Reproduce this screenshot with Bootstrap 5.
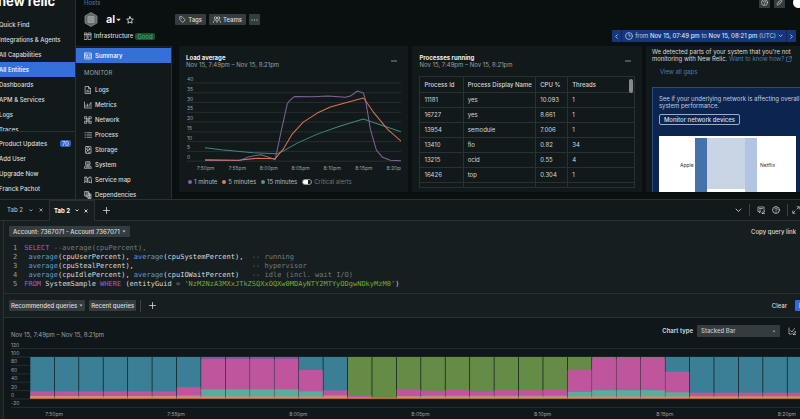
<!DOCTYPE html>
<html lang="en" data-bs-theme="dark">
<head>
<meta charset="utf-8">
<meta name="viewport" content="width=device-width, initial-scale=1">
<title>Hosts – al</title>
<link href="https://cdn.jsdelivr.net/npm/bootstrap@5.3.0/dist/css/bootstrap.min.css" rel="stylesheet">
<style>
:root{--line:#2a3133;--panel:#12191b;--txt:#d9dcdc;--dim:#9ba1a2;--blue:#3470d8;--btn:#343c3f}
body{font:500 6px/8px Inter,"Liberation Sans",sans-serif;background:#0a0f10;color:var(--txt);overflow:hidden}
a{color:inherit;text-decoration:none}
svg{display:block;flex:none}
.ic{fill:none;stroke:currentColor;stroke-width:1.3;stroke-linecap:round;stroke-linejoin:round}
.thin{stroke-width:.8}
.fit{min-height:0}
.upper{height:47.5vh;flex:none}
.side{width:76px;background:var(--panel);border-right:1px solid var(--line);flex:none}
.brand{font-size:13px;line-height:14px;font-weight:700;margin:-6px 0 9px -2px;color:#fff;white-space:nowrap}
.side a{height:15px;flex:none;white-space:nowrap}
.side a.on,.subnav a.on{background:var(--blue);color:#fff}
.side .low{border-top:1px solid var(--line);padding:4px 0 3px}
.side a span:first-child{margin-left:-1px}
.pill{background:#2b62c4;border-radius:2px;font-size:6px;line-height:7px;padding:0 2px;margin-right:4px;color:#dfe8fb}
.head{height:46px;flex:none}
.tbtn{--bs-btn-padding-x:4px;--bs-btn-padding-y:0;--bs-btn-font-size:6px;--bs-btn-line-height:11px;--bs-btn-border-radius:1px;--bs-btn-border-width:0px;--bs-btn-bg:var(--btn);--bs-btn-color:#dcdfdf;--bs-btn-font-weight:500;height:11px;white-space:nowrap;display:inline-flex;align-items:center;gap:2px}
.tbtn.slim{--bs-btn-padding-x:2px}
.tight{gap:2px}
.plain{background:none;border:0;padding:0;color:var(--txt);font-weight:500;display:flex}
.hosts{color:#4b6ea3;line-height:6px}
.title{font-size:11px;line-height:13px;font-weight:600;color:#fff;gap:1px}
.titlerow{margin:6px 0 5px}
.star{margin-left:5px}
.tagrow{margin-left:41px;gap:3px}
.good{background:#1c5237;color:#43b37a;border-radius:2px;padding:0 2px;line-height:7px;font-weight:400}
.corner{margin-top:-3px}
.avatar{width:11px;height:11px;margin-right:-8px}
.period{background:#17377c;color:#b9cdf3;height:12px;border-radius:1px}
.period button{color:inherit;background:none;border:0;padding:0 3px;font-weight:400;gap:2px;line-height:12px;align-items:center;display:flex;white-space:nowrap}
.period button+button{border-left:1px solid #0e2758}
.period b{font-weight:500;color:#d6e2fa}
.subnav{width:96px;background:var(--panel);border-right:1px solid var(--line);flex:none;padding-top:1px;border-top:1px solid #1b2325}
.subnav a{height:15px;padding-left:8px;gap:3px;flex:none}
.subnav .grp{color:var(--dim);font-size:6px;font-weight:400;line-height:8px;margin:6px 0 5px 8px}
.board{padding:0 0 7px 7px;gap:4px}
.tile{background:var(--panel);padding:8px 7px 0;flex:229 1 0;min-width:0}
.tile h2{font-size:6px;line-height:7px;font-weight:700;margin:0;color:#eceeee}
.dim{color:var(--dim);font-weight:400}
.tile p{line-height:7px;margin:0;white-space:nowrap}
.gaps{flex:150 1 0;padding-top:2px;padding-left:6px;font-weight:400}
.lnk{color:#4c79b8}
.viewall{margin:6px 0 11px 8px}
.promo{background:#0c2450;border:1px solid #2a4a80;border-right:0;border-bottom:0;padding:7px 0 0 6px;margin-right:-7px;color:#c4cddf;gap:5px}
.promo .btn{--bs-btn-bg:transparent;--bs-btn-border-width:1px;--bs-btn-border-color:#9fabc4;border-radius:2px;line-height:9px;flex:none}
.flow{margin-top:6px}
.tbl-wrap{border:1px solid var(--line);overflow:hidden;min-height:0;position:relative}
.procs{--bs-table-bg:transparent;--bs-table-color:#d5d8d8;margin:0;table-layout:fixed;border-color:var(--line)}
.procs>:not(caption)>*>*{padding:3px 4px;line-height:8px;font-weight:400;border-width:0 1px 1px 0;border-color:var(--line);height:15px;white-space:nowrap}
.procs thead th{font-weight:500}
.procs tr>:last-child{border-right-width:0}
.w1{width:20%}.w2{width:34%}.w3{width:15%}
.thumb{position:absolute;right:1px;top:2px;width:4px;height:14px;background:#858b8c;border-radius:2px}
.dot{width:4px;height:4px;border-radius:50%;flex:none}
.d1{background:#8a62a6}.d2{background:#e8795a}.d3{background:#4b9a83}
.legend{gap:5px;font-weight:400;line-height:8px;white-space:nowrap;color:#b6baba;padding-left:2px;margin-top:5px}
.crit{color:#70787a;gap:2px}
.sw{appearance:none;width:10px;height:6px;border:1px solid #8f9596;border-radius:3px;margin:0;background:radial-gradient(circle at 2px 50%,#fff 3px,transparent 3px);flex:none}
.lower{background:#171e20;border-top:1px solid var(--line);min-height:0}
.tabs{height:21px;flex:none;background:#12191b;border-bottom:1px solid var(--line);padding-left:3px}
.qtab{height:21px;padding:0 6px 0 4px;width:46px;color:#b2b7b7;border:0;background:none;font-weight:500;white-space:nowrap}
.qtab.on{background:#171e20;border:1px solid var(--line);border-bottom:0;color:#fff;font-weight:700}
.tools{gap:7px}
.work{margin-left:3px;border-left:1px solid var(--line);min-height:0}
.qhead{padding:5px 4px 0 5px}
.code{font:7px/9px "DejaVu Sans Mono","Liberation Mono",monospace;margin:7px 0 4px 9px;color:#d8dbdb;overflow:visible}
.code .n{color:#9ba1a2;margin-right:7px}
.k{color:#a45fc0}.f{color:#5f9bd8}.c{color:#747c7e}.s{color:#7aa93a}
.bar2{height:25px;flex:none;border-top:1px solid var(--line);border-bottom:1px solid var(--line);padding-left:5px}
.vr1{width:1px;height:12px;background:#3a4244}
.run{--bs-btn-bg:#2f6be0;--bs-btn-color:#fff;margin-right:-20px;width:25px}
.viz{background:#10171a}
.vhead{padding:7px 4px 0 7px;height:21px}
.vhead label{font-weight:600}
.ctype{width:83px;height:12px;font-size:6px;line-height:10px;padding:0 4px;border:0;border-radius:1px;color:#c4c8c9;font-weight:500;background:var(--btn) url("data:image/svg+xml,%3Csvg xmlns='http://www.w3.org/2000/svg' viewBox='0 0 8 5'%3E%3Cpath d='M1 1l3 3 3-3z' fill='%23a5abac'/%3E%3C/svg%3E") no-repeat right 4px center/4px 3px}
.plot{width:100%;height:auto;overflow:hidden}
.plot text{font:400 5px Inter,"Liberation Sans",sans-serif;fill:#9ba1a2}
</style>
</head>
<body class="d-flex flex-column vh-100">
<div class="upper d-flex">
  <nav class="side d-flex flex-column overflow-hidden">
    <div class="d-flex flex-column flex-fill overflow-hidden fit">
      <div class="brand">new relic</div>
      <a href="#" class="d-flex align-items-center"><span>Quick Find</span></a>
      <a href="#" class="d-flex align-items-center"><span>Integrations &amp; Agents</span></a>
      <a href="#" class="d-flex align-items-center"><span>All Capabilities</span></a>
      <a href="#" class="d-flex align-items-center on"><span>All Entities</span></a>
      <a href="#" class="d-flex align-items-center"><span>Dashboards</span></a>
      <a href="#" class="d-flex align-items-center"><span>APM &amp; Services</span></a>
      <a href="#" class="d-flex align-items-center"><span>Logs</span></a>
      <a href="#" class="d-flex align-items-center"><span>Traces</span></a>
    </div>
    <div class="low d-flex flex-column">
      <a href="#" class="d-flex align-items-center justify-content-between"><span>Product Updates</span><span class="pill">70</span></a>
      <a href="#" class="d-flex align-items-center"><span>Add User</span></a>
      <a href="#" class="d-flex align-items-center"><span>Upgrade Now</span></a>
      <a href="#" class="d-flex align-items-center"><span>Franck Pachot</span></a>
    </div>
  </nav>
  <div class="d-flex flex-column flex-fill overflow-hidden">
    <header class="head d-flex justify-content-between ps-2">
      <div>
        <a href="#" class="hosts d-block">Hosts</a>
        <div class="titlerow d-flex align-items-center">
          <svg width="14" height="15" viewBox="0 0 14 15"><path d="M7 .5l6 3.500v7l-6 3.500-6-3.500v-7z" fill="#62696b" stroke="#868c8e" stroke-width=".8"/><rect x="3.500" y="4" width="7" height="7" rx="1" fill="#969c9d"/><path d="M4.500 6.300h5M4.500 8.700h5" stroke="#7b8183" stroke-width=".6"/></svg>
          <button class="plain title ms-2 align-items-center">al <svg width="5" height="4" viewBox="0 0 5 4"><path d="M.3 .8h4.400L2.500 3.300z" fill="#dfe1e1"/></svg></button>
          <button class="plain star" aria-label="Favorite"><svg class="ic" width="8" height="8" viewBox="0 0 16 16"><path stroke-width="1.800" d="M8 1.500l2 4.400 4.700.5-3.500 3.200 1 4.800L8 12l-4.200 2.400 1-4.800L1.300 6.400 6 5.900z"/></svg></button>
          <div class="tagrow d-flex align-items-center">
            <button class="btn tbtn"><svg class="ic" width="7" height="7" viewBox="0 0 14 14"><path d="M1.500 2v5l6 6 5-5.500-6-5.500zM4.500 4.500v.4"/></svg>Tags</button>
            <button class="btn tbtn"><svg class="ic" width="8" height="7" viewBox="0 0 16 14"><circle cx="5" cy="4" r="2.500"/><circle cx="11" cy="4" r="2.500"/><path d="M1 13c0-3 1-5 4-5s3 2 3 5c0-3 1-5 3-5 3 0 4 2 4 5"/></svg>Teams</button>
            <button class="btn tbtn slim" aria-label="More"><svg width="7" height="2" viewBox="0 0 7 2" fill="#aaafb0"><circle cx="1" cy="1" r=".7"/><circle cx="3.500" cy="1" r=".7"/><circle cx="6" cy="1" r=".7"/></svg></button>
          </div>
        </div>
        <div class="d-flex align-items-center tight">
          <svg class="ic" width="8" height="8" viewBox="0 0 16 16"><path d="M1 2h5v13H1zM9 2h5v13H9zM1 5h5M9 5h5M3 8h1M11 8h1"/></svg>
          <span>Infrastructure</span><span class="good">Good</span>
        </div>
      </div>
      <div class="d-flex flex-column align-items-end justify-content-between pb-1 pe-1">
        <div class="corner d-flex gap-1 align-items-start">
          <button class="btn tbtn slim" aria-label="Help"><svg class="ic" width="7" height="7" viewBox="0 0 14 14"><circle cx="7" cy="7" r="6"/><path d="M5 5.500c0-3 4-2.500 4-.3C9 7 7 6.800 7 8.500M7 10.500v.3"/></svg></button>
          <button class="btn tbtn slim" aria-label="Copy link"><svg class="ic" width="7" height="7" viewBox="0 0 14 14"><path d="M6 8.500c-1.500-1.500-1-2.500 0-3.500l2.500-2.500c2-2 5 1 3 3L10 7M8 5.500c1.500 1.500 1 2.500 0 3.500l-2.500 2.500c-2 2-5-1-3-3L4 7"/></svg></button>
          <span class="avatar bg-white rounded-circle ms-1"></span>
        </div>
        <div class="period d-flex">
          <button aria-label="Back"><svg class="ic thin" width="3" height="5" viewBox="0 0 3 5"><path d="M2.300.7L.7 2.500l1.600 1.800"/></svg></button>
          <button><svg class="ic" width="8" height="8" viewBox="0 0 14 14"><circle cx="7" cy="7" r="6"/><path d="M7 3v4h2.500"/></svg><span>from <b>Nov 15, 07:49 pm</b> to <b>Nov 15, 08:21 pm</b> (UTC)</span><svg class="ic thin" width="5" height="4" viewBox="0 0 5 4"><path d="M1 1l1.500 1.600L4 1"/></svg></button>
          <button aria-label="Forward"><svg class="ic thin" width="3" height="5" viewBox="0 0 3 5"><path d="M.7.7l1.600 1.800L.7 4.300"/></svg></button>
        </div>
      </div>
    </header>
    <div class="d-flex flex-fill fit">
      <nav class="subnav d-flex flex-column overflow-hidden">
        <a href="#" class="on d-flex align-items-center"><svg class="ic" width="8" height="8" viewBox="0 0 16 16"><rect x="1" y="2" width="14" height="12" rx="1"/><path d="M4 5.500h3v3H4zM10 5.500h3M10 8h3M4 11h8"/></svg>Summary</a>
        <div class="grp">MONITOR</div>
        <a href="#" class="d-flex align-items-center"><svg class="ic" width="8" height="8" viewBox="0 0 16 16"><path d="M3 1h6l4 4v10H3zM9 1v4h4M6 9v3M8 8v4M10 10v2"/></svg>Logs</a>
        <a href="#" class="d-flex align-items-center"><svg class="ic" width="8" height="8" viewBox="0 0 16 16"><path d="M1 2v12h14M4 11V8M7 11V6M10 11V8l4-5v8"/></svg>Metrics</a>
        <a href="#" class="d-flex align-items-center"><svg class="ic" width="8" height="8" viewBox="0 0 16 16"><rect x="1.500" y="1.500" width="4" height="4"/><rect x="10.500" y="1.500" width="4" height="4"/><rect x="1.500" y="10.500" width="4" height="4"/><rect x="10.500" y="10.500" width="4" height="4"/><rect x="6" y="6" width="4" height="4"/><path d="M5.500 5.500L6 6M10 6l.5-.5M6 10l-.5.5M10 10l.5.5"/></svg>Network</a>
        <a href="#" class="d-flex align-items-center"><svg class="ic" width="8" height="8" viewBox="0 0 16 16"><path d="M2 3.500h1M6 3.500h9M2 8h1M6 8h9M2 12.500h1M6 12.500h9"/></svg>Process</a>
        <a href="#" class="d-flex align-items-center"><svg class="ic" width="8" height="8" viewBox="0 0 16 16"><rect x="3" y="1" width="11" height="14" rx="1.500"/><circle cx="8.500" cy="6" r="3"/><path d="M5 13l3.500-6M9 12.500h3"/></svg>Storage</a>
        <a href="#" class="d-flex align-items-center"><svg class="ic" width="8" height="8" viewBox="0 0 16 16"><path d="M4 1.500h8v6H4zM8 7.500V10M3 10h10l2 4.500H1zM5 12.300h6M6 4h4"/></svg>System</a>
        <a href="#" class="d-flex align-items-center"><svg class="ic" width="8" height="8" viewBox="0 0 16 16"><path d="M1 3l3-1.500L7 4v9l-3-2-3 2zM7 6l3-2V2h4v4l1 1v7l-3-2-2 2V8M4 2v9"/></svg>Service map</a>
        <a href="#" class="d-flex align-items-center"><svg class="ic" width="8" height="8" viewBox="0 0 16 16"><path d="M2 1h7v9H2zM5 10v2h6V4H9M8 12v3h6V6h-3M4 3.500h3M4 6h3M4 8h3M11 9h2M10 13h3"/></svg>Dependencies</a>
      </nav>
      <main class="board d-flex flex-fill overflow-hidden">
        <section class="tile d-flex flex-column">
          <div class="d-flex justify-content-between align-items-center">
            <div><h2>Load average</h2><p class="dim">Nov 15, 7:49pm – Nov 15, 8:21pm</p></div>
            <button class="plain me-1" aria-label="More"><svg width="6" height="2" viewBox="0 0 6 2" fill="#b5b9ba"><circle cx="1" cy="1" r=".7"/><circle cx="3" cy="1" r=".7"/><circle cx="5" cy="1" r=".7"/></svg></button>
          </div>
          <svg class="plot mt-2" viewBox="186 75 215 97" id="load"></svg>
          <div class="legend d-flex align-items-center">
            <span class="d-flex align-items-center tight"><i class="dot d1"></i>1 minute</span>
            <span class="d-flex align-items-center tight"><i class="dot d2"></i>5 minutes</span>
            <span class="d-flex align-items-center tight"><i class="dot d3"></i>15 minutes</span>
            <label class="crit d-flex align-items-center"><input type="checkbox" role="switch" class="sw">Critical alerts</label>
          </div>
        </section>
        <section class="tile d-flex flex-column">
          <div class="d-flex justify-content-between align-items-center">
            <div><h2>Processes running</h2><p class="dim">Nov 15, 7:49pm – Nov 15, 8:21pm</p></div>
            <button class="plain me-1" aria-label="More"><svg width="6" height="2" viewBox="0 0 6 2" fill="#b5b9ba"><circle cx="1" cy="1" r=".7"/><circle cx="3" cy="1" r=".7"/><circle cx="5" cy="1" r=".7"/></svg></button>
          </div>
          <div class="tbl-wrap mt-2 mb-1">
            <table class="table procs">
              <colgroup><col class="w1"><col class="w2"><col class="w3"><col></colgroup>
              <thead><tr><th>Process Id</th><th>Process Display Name</th><th>CPU %</th><th>Threads</th></tr></thead>
              <tbody>
                <tr><td>11181</td><td>yes</td><td>10.093</td><td>1</td></tr>
                <tr><td>16727</td><td>yes</td><td>8.661</td><td>1</td></tr>
                <tr><td>13954</td><td>semodule</td><td>7.006</td><td>1</td></tr>
                <tr><td>13410</td><td>fio</td><td>0.82</td><td>34</td></tr>
                <tr><td>13215</td><td>ocid</td><td>0.55</td><td>4</td></tr>
                <tr><td>16426</td><td>top</td><td>0.304</td><td>1</td></tr>
                <tr><td>13426</td><td>oracle-cloud-ag</td><td>0.3</td><td>11</td></tr>
              </tbody>
            </table>
            <div class="thumb"></div>
          </div>
        </section>
        <section class="tile gaps d-flex flex-column">
          <p>We detected parts of your system that you're not<br>monitoring with New Relic. <a href="#" class="lnk">Want to know how? <svg class="ic d-inline-block" width="6" height="6" viewBox="0 0 12 12"><path d="M5 2H1v9h9V7M7 1h4v4M11 1L6 6"/></svg></a></p>
          <a href="#" class="lnk viewall">View all gaps</a>
          <div class="promo flex-fill d-flex flex-column align-items-start overflow-hidden">
            <p>See if your underlying network is affecting overall<br>system performance.</p>
            <button class="btn tbtn">Monitor network devices</button>
            <svg class="flow" width="137" height="56" viewBox="0 0 137 56"><path fill="#fff" d="M0 0h137v56H0z"/><path fill="#4472ab" d="M36 2h12v54H36z"/><path fill="#c9d4e4" d="M48 2h38v51H48z"/><path fill="#b4c5e3" d="M86 2h12v54H86z"/><text x="21" y="31" font-size="5" font-weight="400" fill="#333">Apple</text><text x="101" y="31" font-size="5" font-weight="400" fill="#333">Netflix</text></svg>
          </div>
        </section>
      </main>
    </div>
  </div>
</div>

<div class="lower d-flex flex-column flex-fill overflow-hidden">
  <div class="tabs d-flex align-items-center justify-content-between">
    <div class="d-flex align-items-center">
      <button class="qtab d-flex align-items-center justify-content-between">Tab 2 <svg class="ic thin" width="4" height="3" viewBox="0 0 4 3"><path d="M.8.8L2 2 3.200.8"/></svg><svg class="ic thin" width="4" height="4" viewBox="0 0 4 4"><path d="M.8.8l2.400 2.400M3.200.8L.8 3.200"/></svg></button>
      <button class="qtab on d-flex align-items-center justify-content-between">Tab 2 <svg class="ic thin" width="4" height="3" viewBox="0 0 4 3"><path d="M.8.8L2 2 3.200.8"/></svg><svg class="ic thin" width="4" height="4" viewBox="0 0 4 4"><path d="M.8.8l2.400 2.400M3.200.8L.8 3.200"/></svg></button>
      <button class="plain ms-2" aria-label="New tab"><svg class="ic thin" width="7" height="7" viewBox="0 0 7 7"><path d="M3.500.5v6M.5 3.500h6"/></svg></button>
    </div>
    <div class="tools d-flex align-items-center">
      <button class="plain" aria-label="Collapse"><svg class="ic thin" width="7" height="5" viewBox="0 0 7 5"><path d="M1 1l2.500 2.500L6 1"/></svg></button>
      <div class="vr1"></div>
      <button class="plain" aria-label="Feedback"><svg class="ic" width="8" height="8" viewBox="0 0 16 16"><path d="M7 11l-2 3v-3H2V2h12v5M5 5h6M5 8h3M14 9l-4 4v2h2l3-4zM11 15h4"/></svg></button>
      <button class="plain" aria-label="Help"><svg class="ic" width="8" height="8" viewBox="0 0 14 14"><circle cx="7" cy="7" r="6"/><path d="M5 5.500c0-3 4-2.500 4-.3C9 7 7 6.800 7 8.500M7 10.500v.3"/></svg></button>
      <div class="d-flex align-items-center gap-1">
        <div class="vr1"></div>
        <button class="plain" aria-label="Expand"><svg class="ic" width="8" height="8" viewBox="0 0 16 16"><path d="M10 1.500h4.500V6M14 2l-4 4M1.500 10v4.500H6M2 14l4-4"/></svg></button>
      </div>
    </div>
  </div>
  <div class="work flex-fill d-flex flex-column">
    <div class="qhead d-flex justify-content-between align-items-center">
      <button class="btn tbtn">Account: 7367071 - Account 7367071 <svg width="4" height="3" viewBox="0 0 4 3"><path d="M.3.5h3.400L2 2.600z" fill="#b5babb"/></svg></button>
      <button class="plain">Copy query link</button>
    </div>
<pre class="code"><span class="n">1</span><span class="k">SELECT</span> <span class="c">--average(cpuPercent),</span>
<span class="n">2</span> <span class="f">average</span>(cpuUserPercent), <span class="f">average</span>(cpuSystemPercent),  <span class="c">-- running</span>
<span class="n">3</span> <span class="f">average</span>(cpuStealPercent),                            <span class="c">-- hypervisor</span>
<span class="n">4</span> <span class="f">average</span>(cpuIdlePercent), <span class="f">average</span>(cpuIOWaitPercent)   <span class="c">-- idle (incl. wait I/O)</span>
<span class="n">5</span><span class="k">FROM</span> SystemSample <span class="k">WHERE</span> (entityGuid <span class="c">=</span> <span class="s">'NzM2NzA3MXxJTkZSQXxOQXw0MDAyNTY2MTYyODgwNDkyMzM0'</span>)</pre>
    <div class="bar2 d-flex justify-content-between align-items-center">
      <div class="d-flex align-items-center gap-1">
        <button class="btn tbtn slim">Recommended queries <svg width="4" height="3" viewBox="0 0 4 3"><path d="M.3.5h3.400L2 2.600z" fill="#b5babb"/></svg></button>
        <button class="btn tbtn slim">Recent queries</button>
        <div class="vr1"></div>
        <button class="plain ms-1" aria-label="Add"><svg class="ic thin" width="7" height="7" viewBox="0 0 7 7"><path d="M3.500.5v6M.5 3.500h6"/></svg></button>
      </div>
      <div class="d-flex align-items-center gap-2"><button class="plain">Clear</button><button class="btn tbtn run">Run</button></div>
    </div>
    <div class="viz flex-fill">
      <div class="vhead d-flex justify-content-between align-items-start">
        <span class="dim align-self-end">Nov 15, 7:49pm – Nov 15, 8:21pm</span>
        <div class="d-flex align-items-center gap-1">
          <label for="ctype">Chart type</label>
          <select id="ctype" class="ctype form-select"><option>Stacked Bar</option></select>
          <button class="plain ms-1" aria-label="Chart settings"><svg class="ic" width="8" height="8" viewBox="0 0 16 16"><path d="M2 2v12h5M5 7l3 3 5-7M14 9l-4 4v2h2l3-4zM11 15h4"/></svg></button>
        </div>
      </div>
      <svg class="plot" viewBox="4 339 796 80" id="cpu"></svg>
    </div>
  </div>
</div>
<script>
const range = (a, b) => Array.from({length: b - a}, (_, i) => a + i);
const times = ['7:50pm','7:55pm','8:00pm','8:05pm','8:10pm','8:15pm','8:20pm'];

// Load average lines
const curve = (c, p) => `<polyline points="${p}" fill="none" stroke="${c}" stroke-width="1" stroke-linejoin="round"/>`;
let g = '';
range(0, 9).forEach(i => {
  const y = 160 - i * 9.75;
  g += `<path d="M187 ${y}H401" stroke="#2f3739" stroke-width=".7"/><text x="187" y="${y - 2}">${i * 5}</text>`;
});
times.forEach((t, i) => {
  g += `<text x="${205.5 + i * 31.6}" y="169" text-anchor="middle">${t}</text>`;
});
g += curve('#3f8a75', '205,146.500 221,148.500 237,150 253,151.700 265,152 277,152.500 283,150 297,142 317,133 340,125 363,118 382,124.500 401,130.700');
g += curve('#84609c', '205,159.300 240,159.300 249,155.500 261,153.500 270,156.500 275,158.500 281,130 287,103 289,100 294,95.500 312,95.700 328,95 345,96.300 350,95 357,90 363,92 365,98 370,128 376,149 382,156 390,159 401,159.500');
g += curve('#dd7154', '205,158.500 238,159 258,157 275,157.500 283,148 292,133 303,121 317,112 330,106 350,100.500 363,97 364,98 373,111 387,128 401,140.300');
document.getElementById('load').innerHTML = g;

// CPU stacked bars: base colour, then tops of pink, teal and orange layers in percent
const B = '#3b7f96', G = '#648c46', P = '#7a5ca0';
const data = [
  ...range(0, 6).map(() => [B, 18, 7, 7]), [B, 28, 9, 6],
  ...range(0, 4).map(() => [P, 95, 23, 6]), [B, 69, 18, 6], [B, 20, 9, 6], [G, 9, 5, 1], [G, 4, 3, 1],
  [G, 23, 7, 6], [G, 19, 8, 6], [G, 22, 8, 6], [G, 18, 8, 6], [G, 21, 8, 6], [G, 21, 8, 6], [G, 22, 8, 6],
  [G, 70, 17, 6], ...range(0, 3).map(() => ['#a06a84', 96, 21, 6]), [B, 65, 16, 6],
  ...range(0, 5).map(() => [B, 15, 7, 6])
];
let s = '';
range(-1, 7).forEach(i => {
  const y = 399 - i * 8.4;
  s += `<path d="M11 ${y}H800" stroke="#262e30" stroke-width="1"/><text x="11" y="${y - 2}">${i * 20}</text>`;
});
data.forEach(([base, pink, teal, or], i) => {
  const x = 30.3 + i * 24.43, w = 23.7, r = (v, c) => `<rect x="${x}" y="${399 - v * .42}" width="${w}" height="${v * .42}" fill="${c}"/>`;
  s += r(100, base) + r(pink, '#bf559c') + r(teal, teal - or > 6 ? '#5cab9b' : '#a08d80') + r(or, '#cf8e76') + r(2, '#b5602f');
});
times.forEach((t, i) => {
  s += `<text x="${54 + i * 122.15}" y="416" text-anchor="middle">${t}</text>`;
});
document.getElementById('cpu').innerHTML = s;
</script>
<script src="https://cdn.jsdelivr.net/npm/bootstrap@5.3.0/dist/js/bootstrap.bundle.min.js"></script>
</body>
</html>
